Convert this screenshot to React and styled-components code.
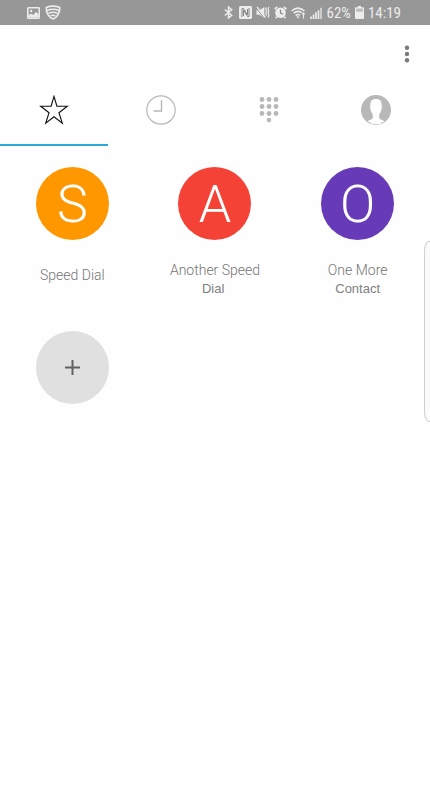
import React, { useState } from "react";
import styled, { createGlobalStyle } from "styled-components";

const GlobalStyle = createGlobalStyle`
  *, *::before, *::after { box-sizing: border-box; }
  html { background: #fefefe; }
  body { margin: 0; overflow-x: hidden; font-family: Roboto, "Liberation Sans", sans-serif; }
  button { margin: 0; padding: 0; border: 0; background: none; font: inherit; color: inherit; cursor: pointer; }
  svg { display: block; }
`;

const Screen = styled.div`
  position: relative;
  min-height: 100vh;
  background: #fefefe;
`;

const StatusBar = styled.div`
  display: flex;
  align-items: center;
  justify-content: space-between;
  height: 25px;
  padding: 0 29px 0 27px;
  background: #979797;
  color: #ececec;
`;

const StatusGroup = styled.div`
  display: flex;
  align-items: center;
  gap: ${(p) => p.$gap}px;
`;

const StatusText = styled.span`
  padding-top: 2px;
  font-family: "Roboto Condensed", Roboto, sans-serif;
  font-size: 15px;
  line-height: 23px;
`;

const Toolbar = styled.header`
  display: flex;
  justify-content: flex-end;
  height: 50px;
  padding: 14px 8px 0 0;
`;

const MenuButton = styled.button`
  display: grid;
  place-items: center;
  width: 30px;
  height: 30px;
  color: #7a7a7a;
`;

const Tabs = styled.nav`
  display: grid;
  grid-template-columns: repeat(4, 1fr);
`;

const Tab = styled.button`
  display: grid;
  place-items: center;
  height: 71px;
  border-bottom: 2px solid ${(p) => (p.$active ? "#2ba9d6" : "transparent")};
  color: #b8b8b8;
`;

const Contacts = styled.main`
  display: grid;
  grid-template-columns: repeat(3, 1fr);
  row-gap: 32px;
  padding: 21px 1px;
`;

const Contact = styled.button`
  display: flex;
  flex-direction: column;
  align-items: center;
  align-self: start;
  gap: 21px;
`;

const Avatar = styled.span`
  display: grid;
  place-items: center;
  width: 73px;
  height: 73px;
  border-radius: 50%;
  background: ${(p) => p.$color};
  color: ${(p) => p.$ink || "#fff"};
  font-size: 52px;
  font-weight: 300;
  line-height: 1;
`;

const Initial = styled.span`
  padding-top: 2px;
`;

const Label = styled.span`
  display: flex;
  flex-direction: column;
  align-items: center;
  justify-content: center;
  min-height: 28px;
  color: #757575;
  font-size: 14px;
  font-weight: 300;
  line-height: 18px;
`;

const SecondLine = styled.span`
  color: #808080;
  font-family: "Liberation Sans", Arial, sans-serif;
  font-size: 13px;
  font-weight: 400;
  line-height: 20px;
  white-space: pre;
`;

const EdgeHandle = styled.div`
  position: absolute;
  top: 241px;
  right: 0;
  width: 6px;
  height: 181px;
  border: 1px solid #cfcfcf;
  border-right: 0;
  border-radius: 5px 0 0 5px / 10px 0 0 10px;
  background: #fbfbfb;
`;

const PictureIcon = () => (
  <svg width="13" height="12" viewBox="0 0 13 12">
    <rect x="0.800" y="0.800" width="11.400" height="10.400" rx="0.600" fill="none" stroke="currentColor" strokeWidth="1.600" />
    <circle cx="4.200" cy="4" r="1.200" fill="currentColor" />
    <path d="M1.500 10.500V7.800L4 6.800l2.300 1.200L9 4.800 11.500 7.500v3z" fill="currentColor" />
  </svg>
);

const ShieldIcon = () => (
  <svg width="16" height="15" viewBox="0 0 16 15" fill="none" stroke="currentColor" strokeWidth="1.600">
    <path d="M1.200 2.500Q8-.200 14.800 2.500C14.800 8 12.400 12 8 14 3.600 12 1.200 8 1.200 2.500z" />
    <path d="M2 5.400Q8 3 14 5.400M3.600 8.200Q8 6.200 12.400 8.200M5.600 10.900Q8 9.600 10.400 10.900" />
  </svg>
);

const BluetoothIcon = () => (
  <svg width="11" height="13" viewBox="0 0 11 13" fill="none" stroke="currentColor" strokeWidth="1.500">
    <path d="M.8 3.500 7.700 9.200 4.500 12V1L7.700 3.800.800 9.500" />
  </svg>
);

const NfcIcon = () => (
  <svg width="13" height="13" viewBox="0 0 13 13">
    <rect width="13" height="13" rx="1.500" fill="currentColor" />
    <path d="M3 11V2.500H4.500L8.500 9V3M10 2V10.500H8.500L4.500 4V10" fill="none" stroke="#858585" strokeWidth="1" />
  </svg>
);

const MuteIcon = () => (
  <svg width="14" height="13" viewBox="0 0 14 13">
    <path d="M.5 4.300H3.500L8.300 1V12L3.500 8.700H.500z" fill="currentColor" />
    <path d="M.3 2.200 8.200 12" stroke="#979797" strokeWidth="1" />
    <path d="M1 1 9.500 11.500" stroke="currentColor" strokeWidth="1.200" />
    <path d="M10.300 1.500 9.800 3.500l.8 2-.8 2 .8 2M12.900 1l-.8 2 .8 2-.8 2 .8 2-.8 2.500" fill="none" stroke="currentColor" strokeWidth="1.200" />
  </svg>
);

const AlarmIcon = () => (
  <svg width="13" height="13" viewBox="0 0 13 13">
    <circle cx="6.500" cy="6.800" r="5.300" fill="currentColor" />
    <path d="M.7 3.200 3.200.900M12.300 3.200 9.800.900M2.800 10.700 1.500 12.300M10.200 10.700l1.300 1.600" stroke="currentColor" strokeWidth="1.700" />
    <path d="M6.500 3.800v3.200L8.900 8.300" fill="none" stroke="#808080" strokeWidth="1.200" />
  </svg>
);

const WifiIcon = () => (
  <svg width="15" height="12" viewBox="0 0 15 12" fill="none" stroke="currentColor" strokeWidth="1.500">
    <path d="M.6 4Q7 -1.800 13.400 4M2.700 6.300Q7 2.600 11 6M4.700 8.600Q7 6.600 9 8.300" />
    <path d="M5.500 9.800Q7 8.800 8.500 9.800L7 11.500z" fill="currentColor" stroke="none" />
    <path d="M12.500 6v5.500M11.200 7.300 12.500 6 13.800 7.300" strokeWidth="1.100" />
  </svg>
);

const SignalIcon = () => (
  <svg width="13" height="12" viewBox="0 0 13 12" stroke="currentColor" strokeWidth="1.700">
    <path d="M1 12V9.500M3.500 12V7.500M6 12V5.300M8.500 12V3.200" />
    <path d="M11 12V.800" opacity=".750" />
  </svg>
);

const BatteryIcon = () => (
  <svg width="9" height="13" viewBox="0 0 9 13" fill="currentColor">
    <path d="M3 0h3v1.300h2.200q.8 0 .8.800v10q0 .900-.8.900H.800Q0 13 0 12.100v-10q0-.8.800-.8H3z" />
    <path d="M1.200 2.600h6.600v3H1.200z" fill="#b9b9b9" />
  </svg>
);

const MoreIcon = () => (
  <svg width="6" height="18" viewBox="0 0 6 18" fill="currentColor">
    <circle cx="3" cy="2.700" r="2.200" />
    <circle cx="3" cy="9" r="2.200" />
    <circle cx="3" cy="15.300" r="2.200" />
  </svg>
);

const StarIcon = () => (
  <svg width="30" height="30" viewBox="0.500 0.800 29 29" fill="none" stroke="#111" strokeWidth="1.100">
    <path d="M15 2.200 17.800 11.700H27.800L19.800 17.900 23 28 15 21.900 7 28 10.200 17.900 2.200 11.700H12.200z" />
  </svg>
);

const ClockIcon = () => (
  <svg width="30" height="30" viewBox="0 0 30 30" fill="none" stroke="currentColor">
    <circle cx="15" cy="15" r="14.200" strokeWidth="1.200" />
    <path d="M15.500 5V16H7.500" strokeWidth="1.400" />
  </svg>
);

const KeypadIcon = () => (
  <svg width="20" height="26" viewBox="0 0 20 26" fill="currentColor">
    {[3, 10, 17].map((y) =>
      [3, 10, 17].map((x) => <circle key={`${x}-${y}`} cx={x} cy={y - 0.5} r="2.400" />)
    )}
    <circle cx="10" cy="23" r="2.300" />
  </svg>
);

const PersonIcon = () => (
  <svg width="30" height="30" viewBox="0 0 30 30">
    <circle cx="15" cy="15" r="15" fill="currentColor" />
    <path
      d="M15 4C10.800 4 9.200 6.600 9.400 10.500L9 12.800 9.900 15.500C10.300 17.500 11.300 18.600 11.800 19.600V22.500C11.500 25 8.300 24.700 6.700 26.200Q10.300 29.200 15 29.200T23.300 26.200C21.700 24.700 18.500 25 18.200 22.500V19.600C18.700 18.600 19.700 17.500 20.100 15.500L21 12.800 20.600 10.500C20.800 6.600 19.200 4 15 4z"
      fill="#fefefe"
    />
  </svg>
);

const PlusIcon = () => (
  <svg width="15" height="15" viewBox="0 0 15 15" stroke="currentColor" strokeWidth="2">
    <path d="M7.500 0V15M0 7.500H15" />
  </svg>
);

const tabs = [
  { name: "Favourites", Icon: StarIcon },
  { name: "Recents", Icon: ClockIcon },
  { name: "Keypad", Icon: KeypadIcon },
  { name: "Contacts", Icon: PersonIcon },
];

const contacts = [
  { initial: "S", color: "#ff9800", first: "Speed Dial" },
  { initial: "A", color: "#f44336", first: "Another Speed", second: "Dial " },
  { initial: "O", color: "#673ab7", first: "One More", second: "Contact" },
];

export default function App() {
  const [active, setActive] = useState(0);
  return (
    <Screen>
      <GlobalStyle />
      <StatusBar>
        <StatusGroup $gap={5}>
          <PictureIcon />
          <ShieldIcon />
        </StatusGroup>
        <StatusGroup $gap={4}>
          <BluetoothIcon />
          <NfcIcon />
          <MuteIcon />
          <AlarmIcon />
          <WifiIcon />
          <SignalIcon />
          <StatusText>62%</StatusText>
          <BatteryIcon />
          <StatusText>14:19</StatusText>
        </StatusGroup>
      </StatusBar>
      <Toolbar>
        <MenuButton aria-label="More options">
          <MoreIcon />
        </MenuButton>
      </Toolbar>
      <Tabs>
        {tabs.map(({ name, Icon }, i) => (
          <Tab key={name} aria-label={name} $active={i === active} onClick={() => setActive(i)}>
            <Icon />
          </Tab>
        ))}
      </Tabs>
      <Contacts>
        {contacts.map((c) => (
          <Contact key={c.initial}>
            <Avatar $color={c.color}>
              <Initial>{c.initial}</Initial>
            </Avatar>
            <Label>
              <span>{c.first}</span>
              {c.second && <SecondLine>{c.second}</SecondLine>}
            </Label>
          </Contact>
        ))}
        <Contact aria-label="Add speed dial">
          <Avatar $color="#e0e0e0" $ink="#606060">
            <PlusIcon />
          </Avatar>
        </Contact>
      </Contacts>
      <EdgeHandle />
    </Screen>
  );
}
